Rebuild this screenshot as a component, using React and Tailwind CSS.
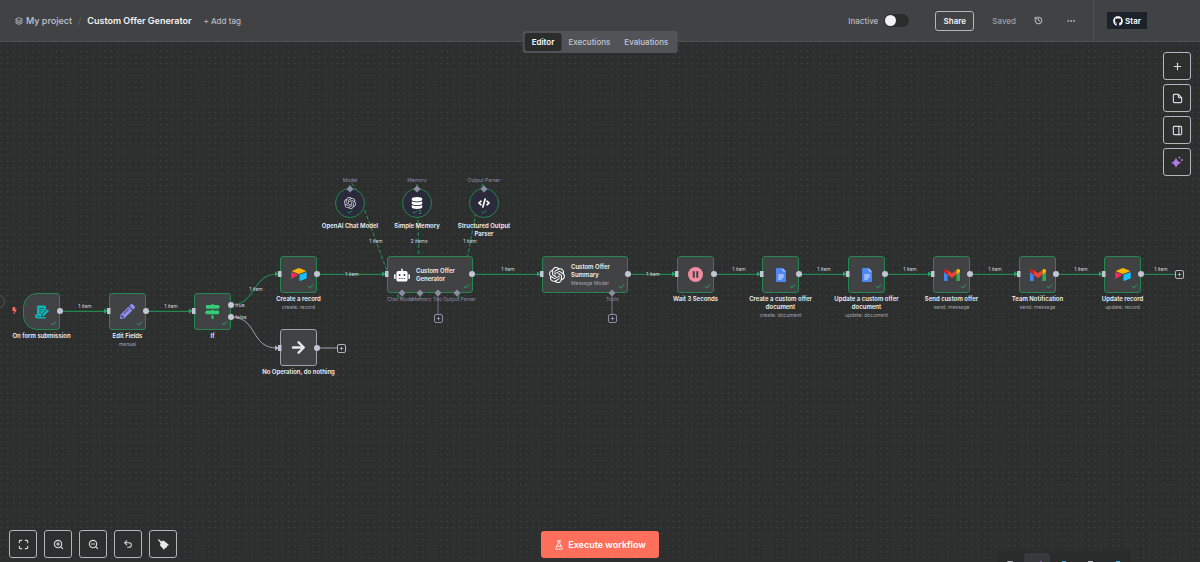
import React from "react";
import { Layers, History, Plus, PanelRight, Maximize, ZoomIn, ZoomOut, Undo2, Check, FlaskConical, Ellipsis } from "lucide-react";
import { FaGithub, FaRobot, FaDatabase, FaCode, FaMapSigns, FaPencilAlt, FaArrowRight, FaBolt } from "react-icons/fa";
import { SiOpenai } from "react-icons/si";

const GREEN = "#23874f";

function Airtable() {
  return (
    <svg viewBox="0 0 48 40" className="h-[13px] w-4" aria-hidden="true">
      <path fill="#fcb400" d="M21.4 1.1 3.6 8.5c-1 .4-1 1.8 0 2.2l17.900 7.100a6.600 6.600 0 0 0 4.900 0l17.900-7.100c1-.4 1-1.800 0-2.200L26.500 1.100a6.600 6.600 0 0 0-5.100 0z" />
      <path fill="#18bfff" d="M25.500 21.700v17c0 .8.8 1.400 1.600 1.100l19.800-7.700c.5-.2.800-.6.800-1.100V14c0-.8-.8-1.400-1.600-1.100l-19.800 7.700c-.5.200-.8.600-.8 1.100z" />
      <path fill="#f82b60" d="m20.800 22.600-6.400 3.100L2 32.500c-.8.400-1.800-.2-1.800-1.100V14.500c0-1 1-1.600 1.900-1.200l18.600 7.400c.8.300.9 1.500.1 1.900z" />
    </svg>
  );
}

function Gmail() {
  return (
    <svg viewBox="52 42 88 66" className="h-3 w-4" aria-hidden="true">
      <path fill="#4285f4" d="M58 108h14V74L52 59v43c0 3.320 2.690 6 6 6" />
      <path fill="#34a853" d="M120 108h14c3.320 0 6-2.690 6-6V59l-20 15" />
      <path fill="#fbbc04" d="M120 48v26l20-15v-8c0-7.420-8.470-11.650-14.400-7.200" />
      <path fill="#ea4335" d="M72 74V48l24 18 24-18v26L96 92" />
      <path fill="#c5221f" d="M52 51v8l20 15V48l-5.600-4.200c-5.940-4.450-14.400-.22-14.400 7.200" />
    </svg>
  );
}

function Doc() {
  return (
    <svg viewBox="0 0 20 28" className="h-[14px] w-[10px]" aria-hidden="true">
      <path fill="#4f86f0" d="M2 0h11l7 7v19a2 2 0 0 1-2 2H2a2 2 0 0 1-2-2V2a2 2 0 0 1 2-2z" />
      <path fill="#a9c6fb" d="M13 0v5a2 2 0 0 0 2 2h5z" />
      <path stroke="#e6efff" strokeWidth="2" d="M4.500 14h11M4.500 18h11M4.500 22h7" />
    </svg>
  );
}

function FormIcon() {
  return (
    <svg viewBox="0 0 28 28" className="size-[14px]" aria-hidden="true">
      <path fill="#0bb5b8" d="M7 1h13a2 2 0 0 1 2 2v6l-9 9-1.500 6H22a3 3 0 0 1-3 3H4a4 4 0 0 1-4-4v-4h4V4a3 3 0 0 1 3-3z" />
      <path stroke="#414244" strokeWidth="1.500" fill="none" d="M8 7h10M8 11.500h7M8 16h4M3 22.500h7" />
      <path fill="#0bb5b8" d="m24.500 8.500 3.500 3.500-9.500 9.500-4.500 1.200 1.200-4.500z" />
    </svg>
  );
}

function Pause() {
  return (
    <svg viewBox="0 0 30 30" className="size-[15px]" aria-hidden="true">
      <circle cx="15" cy="15" r="15" fill="#f28ba0" />
      <path fill="#414244" d="M9.500 8.500h4v13h-4zM16.500 8.500h4v13h-4z" />
    </svg>
  );
}

function Sparkles() {
  return (
    <svg viewBox="0 0 24 24" className="size-3" aria-hidden="true">
      <defs>
        <linearGradient id="spark" x1="0" y1="0" x2="1" y2="0">
          <stop offset="0" stopColor="#8b7cf8" />
          <stop offset="1" stopColor="#d07ac8" />
        </linearGradient>
      </defs>
      <path fill="url(#spark)" d="M10 3c2 6 4.500 8.500 11 10.500-6.500 2-9 4.500-11 10.500-2-6-4.500-8.500-10-10.500C5.500 11.500 8 9 10 3z" />
      <path fill="#b07be0" d="M17 0c.5 2.500 1 3 3 3.500-2 .5-2.500 1-3 3.500-.5-2.500-1-3-3-3.500 2-.5 2.500-1 3-3.500z" />
      <circle cx="22" cy="8" r="2" fill="#d07ac8" />
    </svg>
  );
}

const nodes = [
  { x: 41, y: 251, name: "On form submission", icon: <FormIcon />, trigger: true },
  { x: 127, y: 251, name: "Edit Fields", sub: "manual", icon: <FaPencilAlt className="size-[15px] text-[#8b8ff5]" /> },
  { x: 212, y: 251, name: "If", icon: <FaMapSigns className="size-[15px] text-[#35cc77]" /> },
  { x: 298, y: 214, name: "Create a record", sub: "create: record", icon: <Airtable /> },
  { x: 298, y: 287, name: "No Operation, do nothing", icon: <FaArrowRight className="size-[15px] text-[#e8e9ee]" />, idle: true },
  { x: 695, y: 214, name: "Wait 3 Seconds", icon: <Pause /> },
  { x: 780, y: 214, name: "Create a custom offer\ndocument", sub: "create: document", icon: <Doc /> },
  { x: 866, y: 214, name: "Update a custom offer\ndocument", sub: "update: document", icon: <Doc /> },
  { x: 951, y: 214, name: "Send custom offer", sub: "send: message", icon: <Gmail /> },
  { x: 1037, y: 214, name: "Team Notification", sub: "send: message", icon: <Gmail /> },
  { x: 1122, y: 214, name: "Update record", sub: "update: record", icon: <Airtable /> },
];

const wideNodes = [
  { x: 387, y: 214, name: "Custom Offer\nGenerator", icon: <FaRobot className="size-4 text-white" /> },
  { x: 542, y: 214, name: "Custom Offer\nSummary", sub: "Message Model", icon: <SiOpenai className="size-4 text-white" /> },
];

const subNodes = [
  { x: 350, label: "Model", name: "OpenAI Chat Model", icon: <SiOpenai className="size-3 text-[#d5d6dc]" /> },
  { x: 417, label: "Memory", name: "Simple Memory", count: "2", icon: <FaDatabase className="size-3 text-white" /> },
  { x: 484, label: "Output Parser", name: "Structured Output\nParser", icon: <FaCode className="size-3 text-white" /> },
];

const edges = [
  [60, 269, 109], [146, 269, 194], [317, 232, 387], [472, 232, 542], [628, 232, 677],
  [714, 232, 762], [799, 232, 848], [885, 232, 933], [970, 232, 1019], [1056, 232, 1104],
];

const outputs = [[60, 269], [146, 269], [231, 263], [231, 275], [317, 232], [317, 306], [472, 232], [628, 232], [714, 232], [799, 232], [885, 232], [970, 232], [1056, 232], [1141, 232]];

const edgeLabels = [
  [85, 264, "1 item"], [171, 264, "1 item"], [256, 247, "1 item"], [352, 232, "1 item"], [508, 227, "1 item"],
  [653, 232, "1 item"], [739, 227, "1 item"], [824, 227, "1 item"], [910, 227, "1 item"], [995, 227, "1 item"],
  [1081, 227, "1 item"], [1161, 227, "1 item"], [376, 199, "1 item"], [419, 199, "2 items"], [470, 199, "1 item"],
  [240, 263, "true"], [241, 275, "false"],
];

const portLabels = [
  { left: 387, text: "Chat Mode" },
  { left: 412, text: "Memory" },
  { left: 433, text: "Too" },
  { left: 443, text: "Output Parser" },
  { left: 606, text: "Tools" },
];

const addPoints = [[341, 306, true], [438, 276, false], [612, 276, false], [1179, 232, true]];

function Backdrop() {
  return (
    <svg className="absolute inset-0 h-full w-full" aria-hidden="true">
      <defs>
        <pattern id="dots" x="-1.400" y="0.100" width="6.106" height="6.106" patternUnits="userSpaceOnUse">
          <circle cx="3.050" cy="3.050" r="0.600" fill="#494b4c" />
        </pattern>
      </defs>
      <rect width="100%" height="100%" fill="url(#dots)" />
      <g fill="none" stroke={GREEN} strokeWidth="1.200">
        {edges.map(([a, y, b]) => (
          <path key={a} d={`M${a} ${y + 0.3}H${b - 3}`} />
        ))}
        <path d="M1141 232.300H1175" />
        <path d="M231 263C256 263 252 232 277 232" />
        <g strokeDasharray="4 2">
          <path d="M350 147C350 108 402 290 402 251" />
          <path d="M417 147C417 108 420 290 420 251" />
          <path d="M484 147C484 108 457 290 457 251" />
        </g>
      </g>
      <g fill="none" stroke="#a3a3ae" strokeWidth="1">
        <path d="M231 275C258 275 250 306 277 306M317 306H337" />
        <path stroke="#77778c" d="M438 251V272M612 251V272" />
      </g>
    </svg>
  );
}

function Ports() {
  const inputs = [...edges.map(([, y, b]) => [b, y]), [280, 232], [280, 306]];
  return (
    <svg className="pointer-events-none absolute inset-0 h-full w-full" aria-hidden="true">
      {inputs.map(([x, y]) => (
        <g key={`${x}-${y}`}>
          <path d={`M${x - 5} ${y - 2.5}l4 2.500-4 2.500z`} fill={y === 306 ? "#b9bac8" : "#21a565"} />
          <rect x={x - 2} y={y - 3} width="3.500" height="6" fill="#c3c5d4" />
        </g>
      ))}
      {outputs.map(([x, y]) => (
        <circle key={`${x}-${y}`} cx={x} cy={y} r="3" fill="#c3c5d4" />
      ))}
      {[[402, 251], [420, 251], [438, 251], [457, 251], [612, 251], [350, 147], [417, 147], [484, 147]].map(([x, y]) => (
        <path key={`${x}-${y}`} d={`M${x} ${y - 3.5}l3.500 3.500-3.500 3.500-3.500-3.500z`} fill="#8d8da6" />
      ))}
    </svg>
  );
}

function Node({ x, y, name, sub, icon, trigger, idle }) {
  return (
    <div className="absolute flex w-[81px] flex-col items-center text-center" style={{ left: x - 40, top: y }}>
      <div className={`relative flex size-[37px] items-center justify-center border bg-[#414244] ${trigger ? "rounded-l-[14px] rounded-r-[3px]" : "rounded-[3px]"} ${idle ? "border-[#a3a3ae]" : "border-[#23874f]"}`}>
        {icon}
        {!idle && <Check className="absolute right-0.5 bottom-0.5 size-[7px] text-[#27b36d]" strokeWidth={3} />}
      </div>
      <p className="mt-0.5 text-[6px] leading-2 font-semibold whitespace-pre text-[#f2f2f4]">{name}</p>
      {sub && <p className="text-[5px] leading-2 whitespace-pre text-[#a5a6ad]">{sub}</p>}
    </div>
  );
}

function WideNode({ x, y, name, sub, icon }) {
  return (
    <div className="absolute flex h-[37px] w-[86px] items-center gap-1.5 rounded-[3px] border border-[#23874f] bg-[#414244] pl-1.5" style={{ left: x, top: y }}>
      {icon}
      <div>
        <p className="text-[6px] leading-2 font-semibold whitespace-pre text-[#f2f2f4]">{name}</p>
        {sub && <p className="text-[5px] leading-2 whitespace-pre text-[#a5a6ad]">{sub}</p>}
      </div>
      <Check className="absolute right-0.5 bottom-0.5 size-[7px] text-[#27b36d]" strokeWidth={3} />
    </div>
  );
}

function SubNode({ x, label, name, count, icon }) {
  return (
    <div className="absolute top-[134px] flex w-[80px] flex-col items-center text-center" style={{ left: x - 40 }}>
      <span className="text-[5px] leading-2 text-[#8d8da6]">{label}</span>
      <div className="relative mt-1 flex size-[30px] items-center justify-center rounded-full border border-[#23874f] bg-[#2a2a3b]">
        {icon}
        <span className="absolute inset-x-0 bottom-0.5 flex items-center justify-center text-[5px] leading-[6px] text-[#27b36d]">
          <Check className="size-[6px]" strokeWidth={3} />{count}
        </span>
      </div>
      <p className="mt-1 text-[6px] leading-2 font-semibold whitespace-pre text-[#f2f2f4]">{name}</p>
    </div>
  );
}

function IconButton({ label, children }) {
  return (
    <button aria-label={label} className="flex size-7 items-center justify-center rounded-[3px] border border-[#b4b5bd] bg-[#2d2e2e] text-[#d8d9de]">
      {children}
    </button>
  );
}

export default function App() {
  return (
    <div className="relative flex h-screen flex-col overflow-hidden bg-[#2d2e2e] font-['Inter',sans-serif]">
      <header className="flex h-[42px] shrink-0 items-center border-b border-[#505154] bg-[#414244] pr-[53px] pl-[15px] text-[8px] font-medium text-[#b9bac3]">
        <nav className="flex items-center text-[9px]">
          <a href="#project" className="flex items-center gap-[3px] text-[#c3c5d0]">
            <Layers className="size-2" strokeWidth={2.5} />My project
          </a>
          <span className="mx-[6px] text-[#5c5d61]">/</span>
          <h1 className="font-semibold text-[#f2f2f4]">Custom Offer Generator</h1>
        </nav>
        <button className="ml-3">+ Add tag</button>
        <label className="ml-auto flex items-center gap-1.5">
          Inactive
          <span className="relative flex">
            <input type="checkbox" className="peer h-[13px] w-[25px] appearance-none rounded-full bg-[#2b2c2c]" />
            <span className="pointer-events-none absolute top-px left-px size-[11px] rounded-full bg-[#f1f1f7] peer-checked:left-[13px]" />
          </span>
        </label>
        <button className="ml-[26px] h-5 w-[39px] rounded-[3px] border border-[#b4b5bd] font-semibold text-[#f2f2f4]">Share</button>
        <span className="ml-[18px] text-[#9fa0ab]">Saved</span>
        <button aria-label="Version history" className="ml-[18px] text-[#c9cad0]"><History className="size-[9px]" strokeWidth={2.5} /></button>
        <button aria-label="More actions" className="ml-[23px] text-[#c9cad0]"><Ellipsis className="size-[10px]" /></button>
        <span className="ml-[17px] h-[41px] w-px bg-[#535457]" />
        <a href="#star" className="ml-[13px] flex h-[17px] w-10 items-center justify-center gap-0.5 bg-[#1c222b] font-semibold text-white">
          <FaGithub className="size-[10px]" />Star
        </a>
      </header>

      <div className="absolute top-[31px] left-1/2 z-10 flex h-[22px] -translate-x-1/2 items-center rounded-[3px] bg-[#525356] p-0.5 text-[8px] font-medium text-[#c3c5d4]">
        <button className="h-[18px] rounded-[3px] bg-[#2b2c2c] px-[7px] font-semibold text-white">Editor</button>
        <button className="h-[18px] px-[7px]">Executions</button>
        <button className="h-[18px] px-[7px]">Evaluations</button>
      </div>

      <main className="relative flex-1 overflow-hidden">
        <Backdrop />
        {portLabels.map(({ left, text }) => (
          <span key={text} className="absolute top-[253px] text-[5px] leading-2 whitespace-nowrap text-[#8d8da6]" style={{ left }}>
            {text}
          </span>
        ))}
        {nodes.map((n) => <Node key={n.name} {...n} />)}
        {wideNodes.map((n) => <WideNode key={n.name} {...n} />)}
        {subNodes.map((n) => <SubNode key={n.name} {...n} />)}
        <Ports />
        {edgeLabels.map(([x, y, text]) => (
          <span key={`${x}-${y}`} className="absolute w-10 text-center text-[5px] leading-2 text-[#d3d4dc]" style={{ left: x - 20, top: y - 4 }}>{text}</span>
        ))}
        {addPoints.map(([x, y, bright]) => (
          <button key={x} aria-label="Add node" className={`absolute flex size-[9px] items-center justify-center rounded-[2px] border bg-[#2d2e2e] ${bright ? "border-[#b4b5bd] text-[#d8d9de]" : "border-[#8d8da6] text-[#b9bac8]"}`} style={{ left: x - 4, top: y - 4 }}>
            <Plus className="size-[5px]" strokeWidth={3} />
          </button>
        ))}
        <FaBolt className="absolute top-[265px] left-[11px] size-[7px] text-[#ff6f5c]" />
        <span className="absolute top-[253px] -left-2 size-[13px] rounded-full border border-[#55565a]" />

        <div className="absolute top-[10px] right-[9px] flex flex-col gap-1">
          <IconButton label="Add node"><Plus className="size-[11px]" strokeWidth={2.5} /></IconButton>
          <IconButton label="Add sticky note">
            <svg viewBox="0 0 24 24" className="size-[11px]" fill="none" stroke="currentColor" strokeWidth="2.500" strokeLinejoin="round" aria-hidden="true">
              <path d="M14 3H5a2 2 0 0 0-2 2v14a2 2 0 0 0 2 2h14a2 2 0 0 0 2-2v-9zM14 3v5a2 2 0 0 0 2 2h5" />
            </svg>
          </IconButton>
          <IconButton label="Toggle panel"><PanelRight className="size-[11px]" strokeWidth={2.5} /></IconButton>
          <IconButton label="Ask assistant"><Sparkles /></IconButton>
        </div>

        <div className="absolute bottom-1 left-[9px] flex gap-[7px]">
          <IconButton label="Fit view"><Maximize className="size-[11px]" strokeWidth={2.5} /></IconButton>
          <IconButton label="Zoom in"><ZoomIn className="size-[11px]" strokeWidth={2.5} /></IconButton>
          <IconButton label="Zoom out"><ZoomOut className="size-[11px]" strokeWidth={2.5} /></IconButton>
          <IconButton label="Undo"><Undo2 className="size-[10px]" strokeWidth={2.5} /></IconButton>
          <IconButton label="Tidy up">
            <svg viewBox="0 0 22 22" className="size-[11px]" fill="#e8e9f0" aria-hidden="true">
              <path d="M1 0 7 5l3-2 2 1 3 2 7 6-4 2-1 4-3 0-2 4-5-6-3-3 1-5L0 2z" />
            </svg>
          </IconButton>
        </div>

        <button className="absolute bottom-1 left-1/2 flex h-[27px] w-[118px] -translate-x-1/2 items-center justify-center gap-1 rounded-[3px] bg-[#ff6f5c] text-[9px] font-semibold text-white">
          <FlaskConical className="size-[10px]" />Execute workflow
        </button>

        <div className="absolute right-[69px] bottom-0 grid h-[11px] w-[134px] grid-cols-5 items-end justify-items-center rounded-t-[3px] bg-[#292a2a]">
          <span className="h-px w-[6px] rounded-t-full bg-[#a9aaab]" />
          <span className="flex h-[9px] w-[26px] items-end justify-center rounded-t-[3px] bg-[#38393a]">
            <span className="ml-2 h-px w-0.5 bg-[#8a55a8]" />
          </span>
          <span className="h-px w-1 bg-[#49a9dc]" />
          <span className="h-px w-[5px] bg-[#b9babb]" />
          <span className="h-px w-1 bg-[#49a9dc]" />
        </div>
      </main>
    </div>
  );
}
